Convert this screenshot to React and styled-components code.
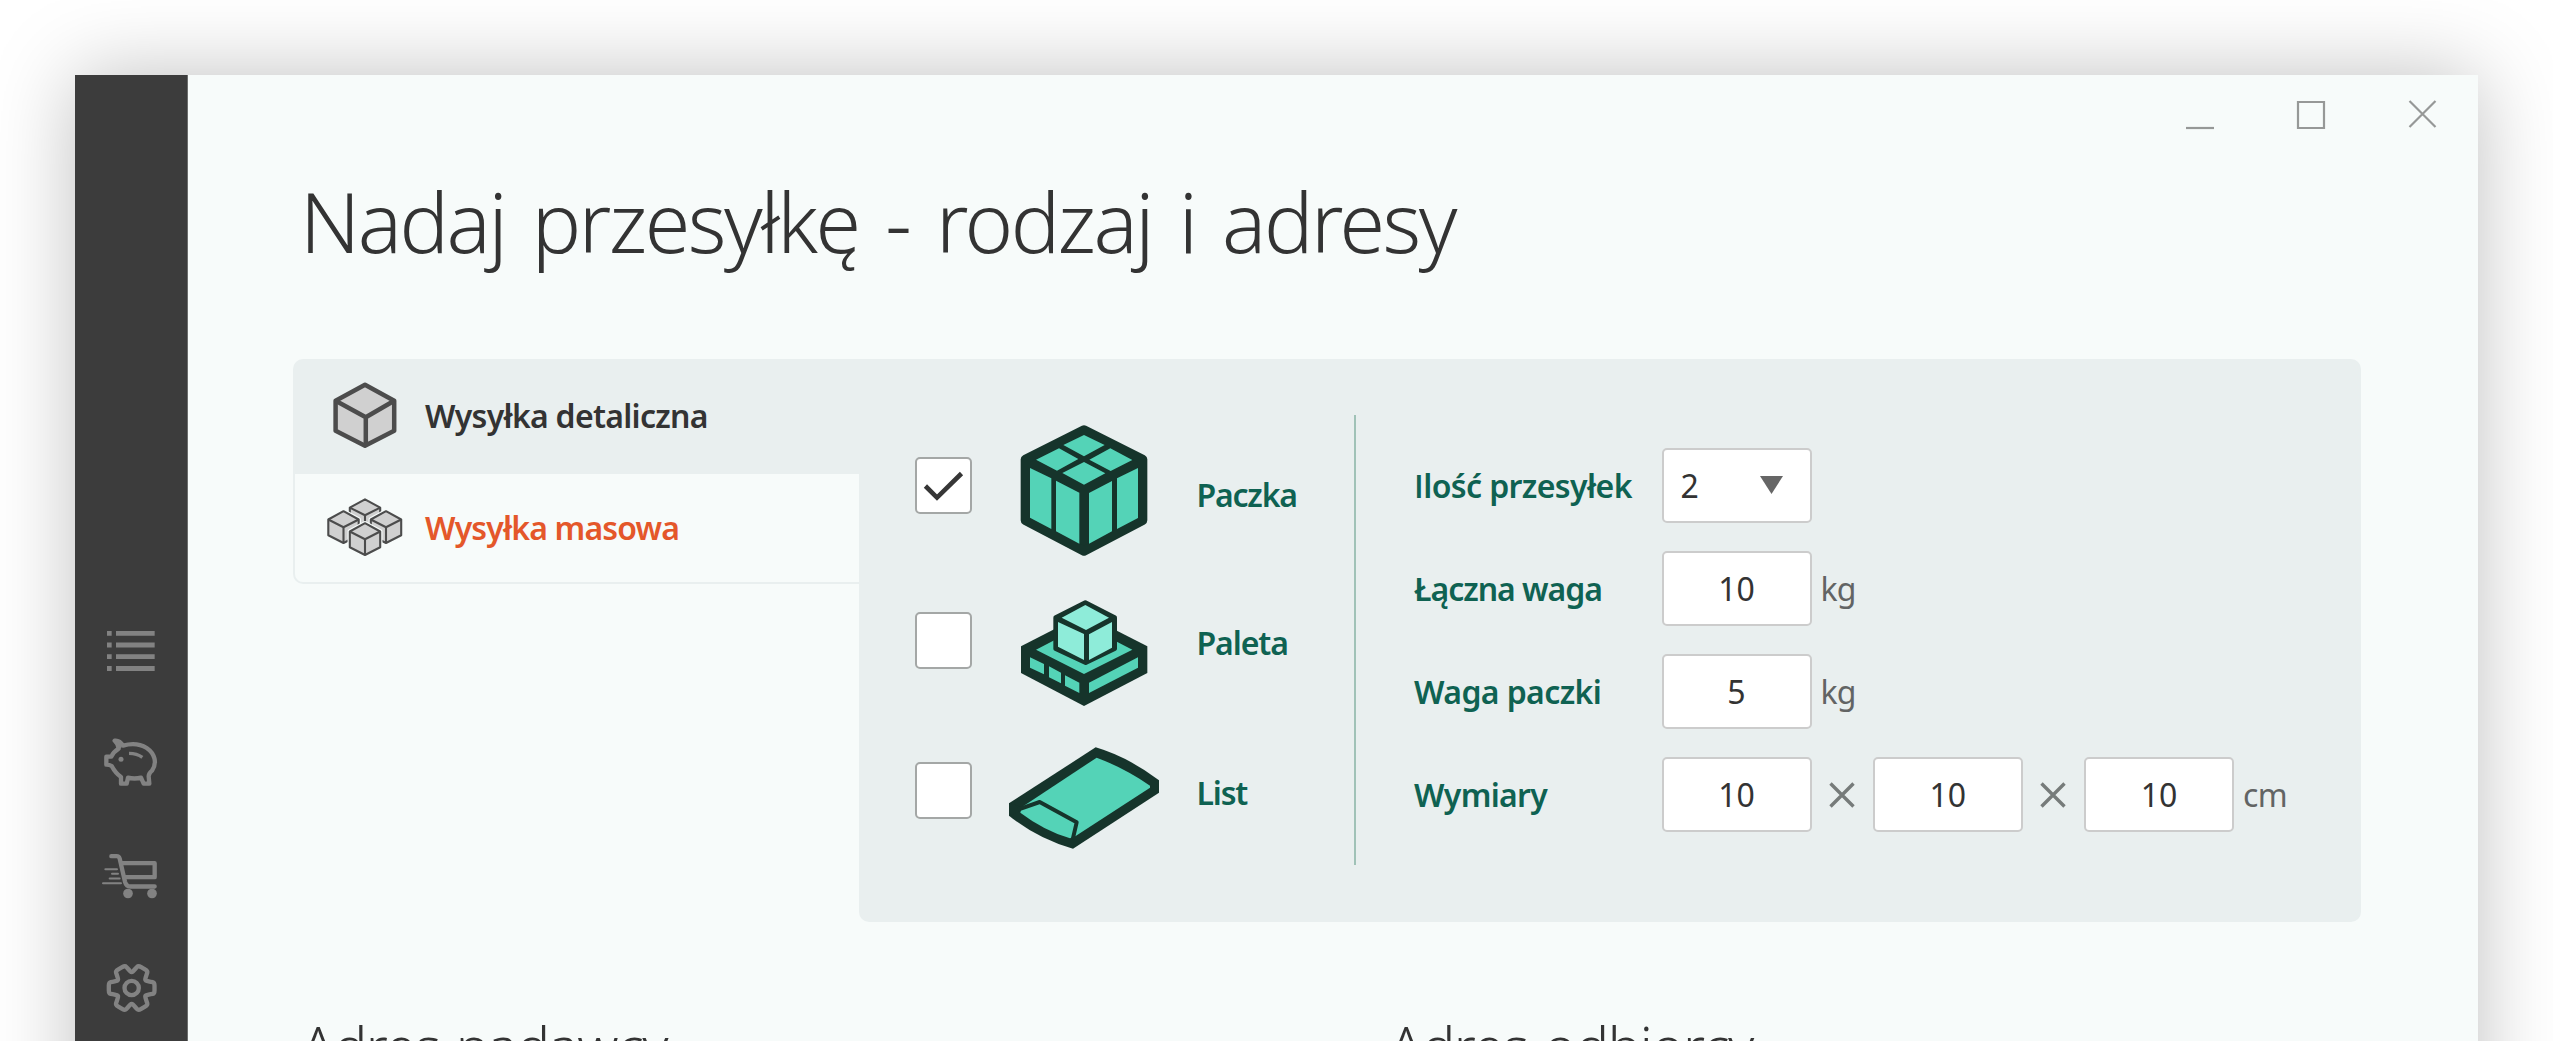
import React from "react";
import styled, { createGlobalStyle, css } from "styled-components";

const ink = "#333333";
const green = "#0f6252";
const surface = "#f7fbfa";
const panel = "#e9efef";
const darkTeal = "#16342b";
const teal = "#54d3b7";
const mint = "#8eecd9";

const GlobalStyle = createGlobalStyle`
  * { box-sizing: border-box; }
  body { margin: 0; background: #ffffff; font-family: "Noto Sans", "Open Sans", sans-serif; color: ${ink}; }
  svg { display: block; flex: none; }
`;

const Desktop = styled.div`
  height: 1041px;
  padding: 75px 75px 0;
  overflow: hidden;
`;

const Window = styled.div`
  display: flex;
  height: 1100px;
  background: ${surface};
  box-shadow: 0 0 78px rgba(0, 0, 0, 0.25);
`;

const Sidebar = styled.nav`
  display: flex;
  flex-direction: column;
  flex: none;
  width: 113px;
  padding-top: 520px;
  background: #3c3c3c;
  border-right: 1px solid #6c6e6d;
`;

const NavItem = styled.div`
  display: flex;
  align-items: center;
  justify-content: center;
  height: 112.3px;
`;

const Main = styled.main`
  flex: 1;
  min-width: 0;
  padding: 0 117px 0 105px;
`;

const TitleBar = styled.div`
  display: flex;
  justify-content: flex-end;
  gap: 82px;
  height: 96px;
  padding-top: 25px;
  margin-right: -77px;
`;

const Title = styled.h1`
  margin: 0 0 88px 7px;
  font-size: 82.5px;
  font-weight: 280;
  line-height: 100px;
  letter-spacing: -2.4px;
  word-spacing: 7.5px;
  white-space: nowrap;
`;

const Shipment = styled.section`
  display: flex;
  align-items: flex-start;
`;

const Tabs = styled.div`
  flex: none;
  width: 566px;
`;

const Tab = styled.div`
  display: flex;
  align-items: center;
  gap: 20px;
  font-size: 32px;
  font-weight: 600;
  white-space: nowrap;
  ${(p) =>
    p.$active
      ? css`
          height: 115px;
          padding-left: 32px;
          background: ${panel};
          border-radius: 10px 0 0 0;
        `
      : css`
          height: 110px;
          padding-left: 30px;
          color: #e4572a;
          border: solid ${panel};
          border-width: 0 0 2px 2px;
          border-radius: 0 0 0 10px;
        `}
`;

const TabLabel = styled.span`
  padding-bottom: 2px;
  letter-spacing: ${(p) => p.$track}px;
`;

const Body = styled.div`
  display: flex;
  flex: 1;
  height: 563px;
  padding: 0 56px;
  background: ${panel};
  border-radius: 0 10px 10px 10px;
`;

const Types = styled.div`
  width: 441px;
  height: 450px;
  margin-top: 56px;
  border-right: 2px solid #a0c2b7;
`;

const TypeRow = styled.div`
  display: flex;
  align-items: center;
  height: ${(p) => p.$height}px;
  &:first-child { margin-top: -7px; }
`;

const Checkbox = styled.div`
  display: flex;
  align-items: center;
  justify-content: center;
  flex: none;
  width: 56.5px;
  height: 56.5px;
  margin-right: 37.5px;
  background: #ffffff;
  border: 2px solid #a4a7a6;
  border-radius: 5px;
`;

const TypeLabel = styled.span`
  margin-left: 37.5px;
  padding-top: ${(p) => p.$drop}px;
  color: ${green};
  font-size: 32px;
  font-weight: 600;
  letter-spacing: ${(p) => p.$track}px;
`;

const Fields = styled.div`
  display: flex;
  flex-direction: column;
  gap: 28.3px;
  padding: 89px 0 0 58px;
`;

const FieldRow = styled.div`
  display: flex;
  align-items: center;
  height: 74.8px;
  font-size: 32px;
`;

const FieldLabel = styled.label`
  flex: none;
  width: 247.5px;
  color: ${green};
  font-weight: 600;
  letter-spacing: ${(p) => p.$track}px;
  white-space: nowrap;
  ${(p) => p.$plainCapital && css`&::first-letter { font-family: "Open Sans", sans-serif; }`}
`;

const Input = styled.div`
  display: flex;
  align-items: center;
  justify-content: ${(p) => (p.$select ? "space-between" : "center")};
  flex: none;
  width: 150px;
  height: 100%;
  padding: ${(p) => (p.$select ? "0 27px 0 17px" : "0")};
  background: #ffffff;
  border: 2px solid #cccccc;
  border-radius: 5px;
`;

const Times = styled.span`
  display: flex;
  justify-content: center;
  width: 61.3px;
`;

const Unit = styled.span`
  margin-left: 9px;
  color: #626464;
  letter-spacing: -0.8px;
`;

const Addresses = styled.div`
  display: grid;
  grid-template-columns: 1088px 1fr;
  margin: 88px 0 0 8px;
`;

const Subtitle = styled.h2`
  margin: 0;
  font-size: 56px;
  font-weight: 280;
  line-height: 70px;
  letter-spacing: -1.4px;
  word-spacing: 3px;
  white-space: nowrap;
`;

function NavIcon({ viewBox, children }) {
  return (
    <svg width="60" height="60" viewBox={viewBox} fill="none" stroke="#828282" strokeWidth="13" strokeLinejoin="round">
      {children}
    </svg>
  );
}

function ListIcon() {
  return (
    <NavIcon viewBox="124 63 180 180">
      {[100, 135, 170, 205.5].map((y) => (
        <path key={y} d={`M142 ${y}h14M169 ${y}h116`} strokeWidth="14.5" />
      ))}
    </NavIcon>
  );
}

function PigIcon() {
  return (
    <NavIcon viewBox="124 400 180 180">
      <path d="M165 423Q180 421 190 438C214 431 240 432 261 445C286 462 293 490 277 513Q267 521 267 530L269 552H252L244 534Q224 539 205 534L201 552H184V532C171 523 163 512 156 499Q150 495 140 495V471H155Q161 457 177 447Q177 434 165 423Z" />
      <path d="M183 445l-7-18" strokeWidth="6" />
      <path d="M208 461Q232 461 248 473" strokeWidth="10" />
      <circle cx="184" cy="479" r="7.5" fill="#828282" stroke="none" />
    </NavIcon>
  );
}

function CartIcon() {
  return (
    <NavIcon viewBox="124 737.5 180 180">
      <path d="M155 768H171Q178 768 180 775L196 845Q200 859 212 859H285" strokeLinecap="round" />
      <path d="M186 789H285V831H193" />
      <path d="M137 807h35M157 821h18M150 835h30M130 849h54" strokeWidth="6" strokeLinecap="round" />
      <g fill="#828282" stroke="none">
        <circle cx="205" cy="880" r="14.5" />
        <circle cx="277" cy="880" r="14.5" />
      </g>
    </NavIcon>
  );
}

const polar = (deg, r) => [Math.cos((deg * Math.PI) / 180) * r, Math.sin((deg * Math.PI) / 180) * r];

function gearPath() {
  const pts = [];
  for (let k = 0; k < 6; k += 1) {
    [[-30, 46, 0.5], [-22, 54, 0.4], [-13.5, 70.5, 0.3], [13.5, 70.5, 0.3], [22, 54, 0.4]].forEach(([a, r, c]) =>
      pts.push([...polar(k * 60 + a, r), c])
    );
  }
  return (
    pts
      .map((p, i) => {
        const a = pts[(i + pts.length - 1) % pts.length];
        const b = pts[(i + 1) % pts.length];
        const mix = (q) => [p[0] + (q[0] - p[0]) * p[2], p[1] + (q[1] - p[1]) * p[2]];
        return `${i ? "L" : "M"}${mix(a).join(" ")}Q${p[0]} ${p[1]} ${mix(b).join(" ")}`;
      })
      .join("") + "Z"
  );
}

function GearIcon() {
  return (
    <NavIcon viewBox="-92 -90 180 180">
      <path d={gearPath()} />
      <circle r="21.5" />
    </NavIcon>
  );
}

function CubeIcon() {
  return (
    <svg width="80" height="80" viewBox="325 376.5 80 80" stroke="#4c4c4c" strokeWidth="4.5" strokeLinejoin="round" fill="#d0d0d0">
      <path d="M365 384.3L394.2 400.3V430.3L365 445.3L335.6 430.3V400.3Z" />
      <path d="M335.6 400.3L365.8 416.8L394.2 400.3M365.8 416.8V445" fill="none" />
    </svg>
  );
}

const cubeOutline = "M0 0L15.2 8.3V24L0 31.8L-15.2 24V8.3Z";

function CubesIcon() {
  return (
    <svg width="80" height="80" viewBox="325 488 80 80" strokeLinejoin="round">
      {[[365, 499.3], [343.5, 511.2], [386, 511.2], [365, 523.2]].map(([x, y]) => (
        <g key={`${x}-${y}`} transform={`translate(${x} ${y})`}>
          <path d={cubeOutline} fill={surface} stroke={surface} strokeWidth="4.5" />
          <path d={cubeOutline} fill="#d0d0d0" stroke="#4c4c4c" strokeWidth="2.1" />
          <path d="M-15.2 8.3L0 16L15.2 8.3M0 16V31.8" fill="none" stroke="#4c4c4c" strokeWidth="2.1" />
        </g>
      ))}
    </svg>
  );
}

function ParcelIcon() {
  return (
    <svg width="150" height="146.67" viewBox="357 35 450 440">
      <path d="M582 89L758 177V360L582 452L406 360V177Z" fill={darkTeal} stroke={darkTeal} strokeWidth="28" strokeLinejoin="round" />
      <path
        fill={teal}
        d="M582 104L644 134L582 168L520 134ZM507 144L565 176L501 211L438 178ZM661 144L727 179L662 212L598 178ZM582 185L646 219L582 253L517 218ZM420 203L484 234V386L420 352ZM498 241L568 277V430L498 393ZM597 278L666 242V393L597 430ZM681 234L744 203V353L681 386Z"
      />
    </svg>
  );
}

function PalletIcon() {
  return (
    <svg width="150" height="140" viewBox="357 1 450 420">
      <path d="M582 133L772 230V310L582 409L393 310V230Z" fill={darkTeal} />
      <path
        fill={teal}
        d="M582 165L727 240L582 313L438 240ZM420 263L462 283V314L420 294ZM477 290L513 309V341L477 323ZM525 317L568 339V370L525 348ZM597 339L744 263V294L597 370Z"
      />
      <path d="M586 99L674 144V237L587 279L497 237V144Z" fill={darkTeal} stroke={darkTeal} strokeWidth="14" strokeLinejoin="round" />
      <path fill={mint} d="M586 106L657 144L588 181L515 144ZM504 157L582 193V271L504 231ZM597 194L666 157V234L597 271Z" />
    </svg>
  );
}

function LetterIcon() {
  return (
    <svg width="150" height="120" viewBox="357 31 450 360">
      <path d="M617 83Q715 112 807 182V219L549 387Q444 358 357 288V251Z" fill={darkTeal} />
      <path d="M620 114Q703 145 780 198V204L557 349L540 356Q461 332 391 279L396 262Z" fill={teal} />
      <path d="M357 251L396 262L384 277L357 288Z" fill={darkTeal} />
      <path d="M384 270L449 247L560 308L548 360" fill="none" stroke={darkTeal} strokeWidth="12" strokeLinejoin="round" />
    </svg>
  );
}

function CheckMark() {
  return (
    <svg width="52" height="52" viewBox="0 0 52 52" fill="none" stroke="#363636" strokeWidth="4.6">
      <path d="M8.4 27L20 38.6L44.5 14.5" />
    </svg>
  );
}

function TimesIcon() {
  return (
    <svg width="26" height="26" viewBox="0 0 26 26" stroke="#767b7a" strokeWidth="3.4">
      <path d="M1.5 1.5L24.5 24.5M24.5 1.5L1.5 24.5" />
    </svg>
  );
}

function WindowControl({ d }) {
  return (
    <svg width="30" height="30" viewBox="0 0 30 30" fill="none" stroke="#969897" strokeWidth="2.2">
      <path d={d} />
    </svg>
  );
}

const types = [
  { label: "Paczka", Icon: ParcelIcon, checked: true, height: 154.6, drop: 18, track: -1.2 },
  { label: "Paleta", Icon: PalletIcon, height: 155.4, drop: 3.5, track: -1.1 },
  { label: "List", Icon: LetterIcon, height: 144.6, drop: 4, track: -1.2 },
];

export default function App() {
  return (
    <Desktop>
      <GlobalStyle />
      <Window>
        <Sidebar>
          <NavItem><ListIcon /></NavItem>
          <NavItem><PigIcon /></NavItem>
          <NavItem><CartIcon /></NavItem>
          <NavItem><GearIcon /></NavItem>
        </Sidebar>
        <Main>
          <TitleBar>
            <WindowControl d="M2 28H30" />
            <WindowControl d="M2 2H28V28H2Z" />
            <WindowControl d="M1.5 1L27.5 27M27.5 1L1.5 27" />
          </TitleBar>
          <Title>Nadaj przesyłkę - rodzaj i adresy</Title>
          <Shipment>
            <Tabs>
              <Tab $active>
                <CubeIcon />
                <TabLabel $track={-0.72}>Wysyłka detaliczna</TabLabel>
              </Tab>
              <Tab>
                <CubesIcon />
                <TabLabel $track={-0.85}>Wysyłka masowa</TabLabel>
              </Tab>
            </Tabs>
            <Body>
              <Types>
                {types.map(({ label, Icon, checked, height, drop, track }) => (
                  <TypeRow key={label} $height={height}>
                    <Checkbox>{checked && <CheckMark />}</Checkbox>
                    <Icon />
                    <TypeLabel $drop={drop} $track={track}>{label}</TypeLabel>
                  </TypeRow>
                ))}
              </Types>
              <Fields>
                <FieldRow>
                  <FieldLabel $track={-0.6} $plainCapital>Ilość przesyłek</FieldLabel>
                  <Input $select>
                    2
                    <svg width="23" height="18" viewBox="0 0 23 18"><path d="M0 0H23L11.5 18Z" fill="#666666" /></svg>
                  </Input>
                </FieldRow>
                <FieldRow>
                  <FieldLabel $track={-1.05}>Łączna waga</FieldLabel>
                  <Input>10</Input>
                  <Unit>kg</Unit>
                </FieldRow>
                <FieldRow>
                  <FieldLabel $track={-0.6}>Waga paczki</FieldLabel>
                  <Input>5</Input>
                  <Unit>kg</Unit>
                </FieldRow>
                <FieldRow>
                  <FieldLabel $track={-0.7}>Wymiary</FieldLabel>
                  <Input>10</Input>
                  <Times><TimesIcon /></Times>
                  <Input>10</Input>
                  <Times><TimesIcon /></Times>
                  <Input>10</Input>
                  <Unit>cm</Unit>
                </FieldRow>
              </Fields>
            </Body>
          </Shipment>
          <Addresses>
            <Subtitle>Adres nadawcy</Subtitle>
            <Subtitle>Adres odbiorcy</Subtitle>
          </Addresses>
        </Main>
      </Window>
    </Desktop>
  );
}
